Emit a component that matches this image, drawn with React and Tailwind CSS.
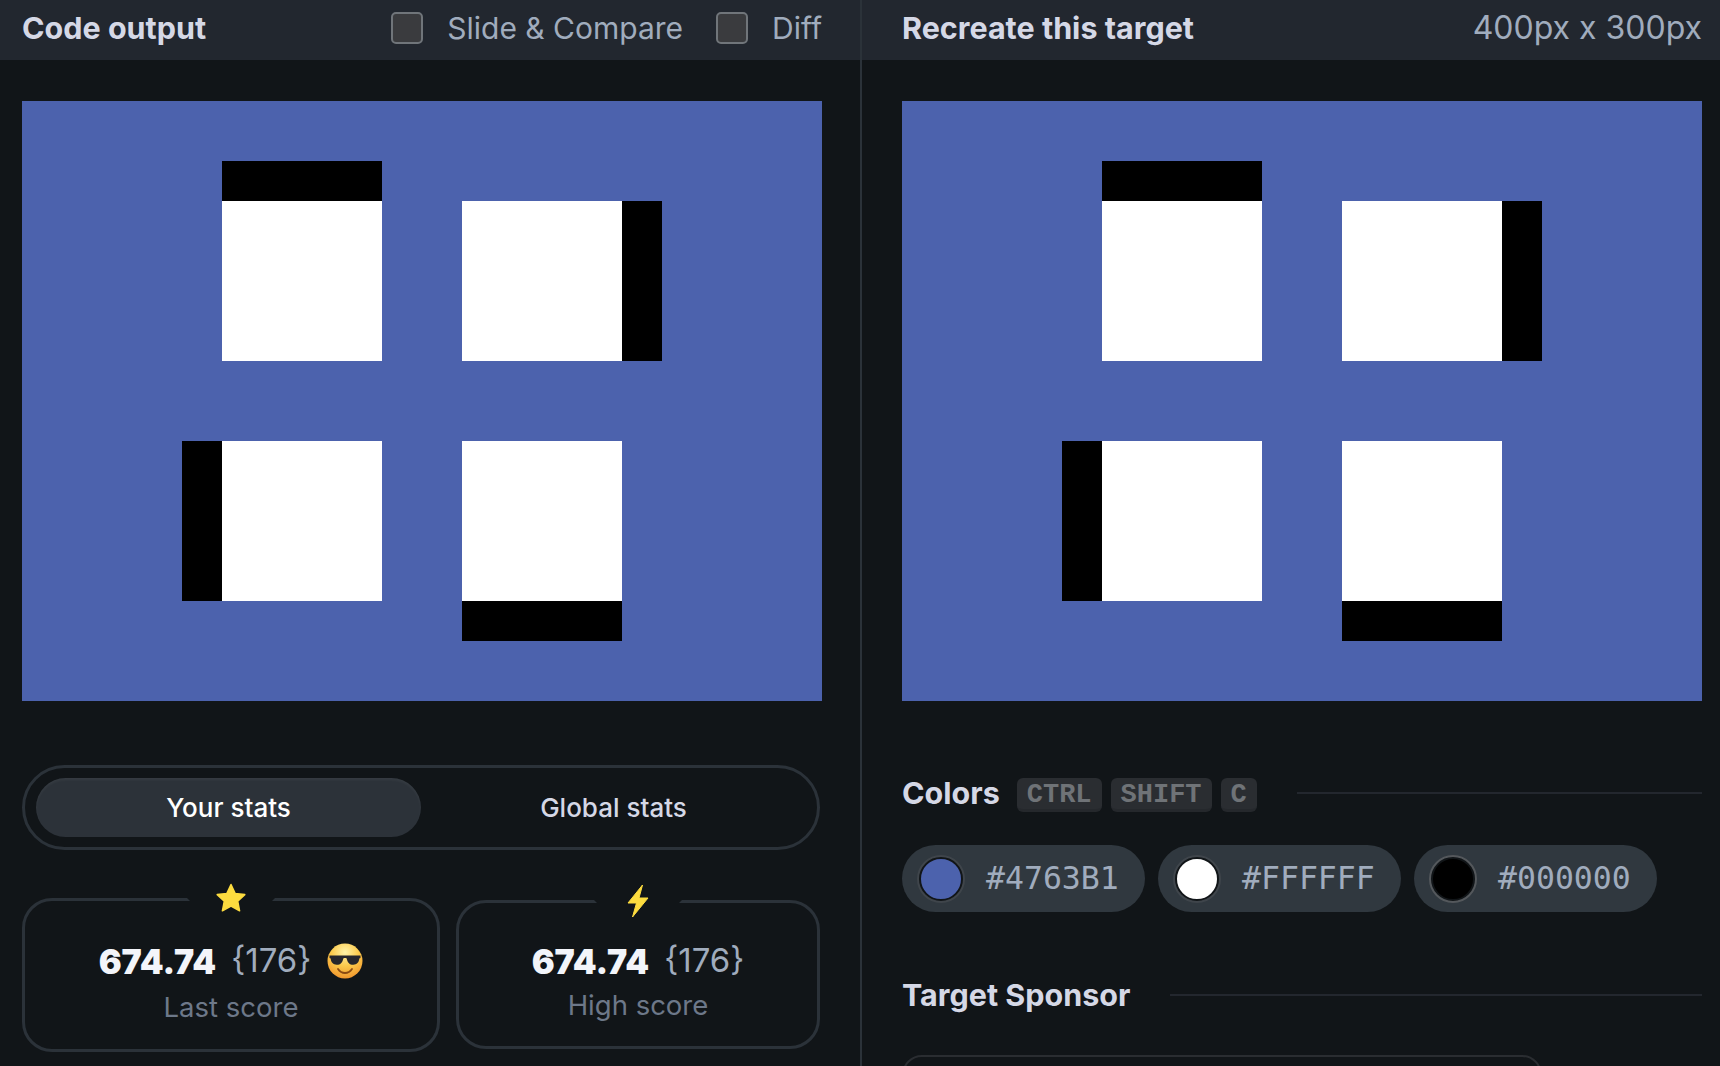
const sans = "font-['Inter',sans-serif]";

function Canvas() {
  return (
    <div className="relative w-[800px] h-[600px] shrink-0 bg-[#4c62ad] overflow-hidden">
      <div className="absolute left-[200px] top-[60px] w-[160px] h-[40px] bg-black" />
      <div className="absolute left-[200px] top-[100px] w-[160px] h-[160px] bg-white" />
      <div className="absolute left-[440px] top-[100px] w-[160px] h-[160px] bg-white" />
      <div className="absolute left-[600px] top-[100px] w-[40px] h-[160px] bg-black" />
      <div className="absolute left-[160px] top-[340px] w-[40px] h-[160px] bg-black" />
      <div className="absolute left-[200px] top-[340px] w-[160px] h-[160px] bg-white" />
      <div className="absolute left-[440px] top-[340px] w-[160px] h-[160px] bg-white" />
      <div className="absolute left-[440px] top-[500px] w-[160px] h-[40px] bg-black" />
    </div>
  );
}

function Star() {
  return (
    <svg width="32" height="32" viewBox="0 0 32 32" className="relative -mt-[2px]">
      <path d="M16 2.500l4.100 8.900 9.700 1.200-7.100 6.600 1.900 9.600-8.600-4.800-8.600 4.800 1.900-9.600-7.100-6.600 9.700-1.200z" fill="#fddc3f" stroke="#fddc3f" strokeWidth="1.500" strokeLinejoin="round" />
    </svg>
  );
}

function Bolt() {
  return (
    <svg width="24" height="34" viewBox="0 0 24 34" className="relative">
      <path d="M16.500 1L2 19h8.500L6.500 33 22 14h-9z" fill="#fddc3f" stroke="#fddc3f" strokeWidth="1" strokeLinejoin="round" />
    </svg>
  );
}

function Cool() {
  return (
    <svg width="36" height="36" viewBox="0 0 36 36">
      <defs>
        <radialGradient id="f" cx="50%" cy="25%" r="80%">
          <stop offset="0%" stopColor="#fff3a8" />
          <stop offset="50%" stopColor="#fcc94a" />
          <stop offset="100%" stopColor="#ee8f2a" />
        </radialGradient>
      </defs>
      <circle cx="18" cy="18" r="17.500" fill="url(#f)" />
      <path d="M2.500 12.500h31v2.500l-1.200.6c-.4 4-2.500 6.200-6 6.200-3.800 0-6-2.600-6.600-6.400-.9-.6-2.500-.6-3.400 0-.6 3.800-2.800 6.400-6.600 6.400-3.500 0-5.600-2.200-6-6.200l-1.200-.6z" fill="#26262c" />
      <path d="M11 26c2 3 4.500 4 7 4s5-1 7-4" fill="none" stroke="#8a4a12" strokeWidth="1.800" strokeLinecap="round" />
    </svg>
  );
}

function Check({ label }) {
  return (
    <div className="flex items-center gap-[24px]">
      <div className="w-[32px] h-[32px] rounded-[5px] border-2 border-[#70757a] bg-[#3a3b3e]" />
      <span className="text-[30px] leading-none text-[#a0acbd]">{label}</span>
    </div>
  );
}

function ScoreCard({ icon, label, emoji, cls, labelCls }) {
  return (
    <div className={`relative flex flex-col items-center border-[3px] border-[#2b3239] rounded-[30px] ${cls}`}>
      <div className="absolute flex items-center justify-center w-[88px] h-[40px] left-1/2 -translate-x-1/2 -top-[22px]">
        <div className="absolute left-0 right-0 top-0 h-[22px] bg-[#111518] [clip-path:polygon(0_0,100%_0,100%_19px,calc(100%-3px)_22px,3px_22px,0_19px)]" />
        {icon}
      </div>
      <div className="flex items-center h-[40px]">
        <span className="text-[34px] font-black text-[#f3f5fa]">674.74</span>
        <span className="ml-[15px] text-[33px] text-[#a0acbd]">{"{176}"}</span>
        {emoji && <span className="ml-[16px] flex"><Cool /></span>}
      </div>
      <span className={`text-[27.500px] leading-none text-[#6d7889] ${labelCls}`}>{label}</span>
    </div>
  );
}

function Kbd({ children }) {
  return (
    <span className="px-[10px] pt-[4px] h-[34px] flex items-center rounded-[6px] bg-[#2a2d31] border-b-[3px] border-[#25282c] font-['Liberation_Mono',monospace] font-bold text-[27px] text-[#6f7377]">
      {children}
    </span>
  );
}

function Swatch({ color, ring, text }) {
  return (
    <div className="flex items-center w-[243px] h-[67px] rounded-full bg-[#30383f] pl-[16px]">
      <div className={`w-[46px] h-[46px] rounded-full border-[3px] border-[#111518] outline-2 -outline-offset-1 ${ring}`} style={{ backgroundColor: color }} />
      <span className="ml-[22px] font-['DejaVu_Sans_Mono',monospace] text-[31.500px] leading-none text-[#a0acbd]">{text}</span>
    </div>
  );
}

const title = "text-[30.500px] leading-none font-bold text-[#d5d8e6]";

export default function App() {
  return (
    <div className={`flex w-[1720px] h-[1066px] overflow-hidden bg-[#111518] ${sans}`}>
      <div className="w-[860px] shrink-0 flex flex-col">
        <div className="flex items-center h-[60px] shrink-0 bg-[#22272f] pl-[22px] pr-[38px] pb-[4px]">
          <span className={title}>Code output</span>
          <div className="ml-auto flex items-center gap-[33px]">
            <Check label="Slide & Compare" />
            <Check label="Diff" />
          </div>
        </div>
        <div className="flex-1 flex flex-col px-[22px] pt-[41px]">
          <Canvas />
          <div className="mt-[64px] w-[798px] h-[85px] p-[11px] rounded-full border-[3px] border-[#2b3239] flex items-center text-[26px] font-medium">
            <div className="w-[385px] h-[59px] flex items-center justify-center rounded-full bg-[#2c3239] text-white shadow-[inset_0_2px_3px_rgba(255,255,255,0.05)]">Your stats</div>
            <div className="flex-1 flex items-center justify-center text-[#d5d8e6]">Global stats</div>
          </div>
          <div className="mt-[48px] flex items-start gap-[16px]">
            <ScoreCard cls="w-[418px] h-[154px] pt-[40px]" icon={<Star />} label="Last score" labelCls="mt-[13px]" emoji />
            <ScoreCard cls="w-[364px] h-[149px] mt-[2px] pt-[38px]" icon={<Bolt />} label="High score" labelCls="mt-[11px]" />
          </div>
        </div>
      </div>
      <div className="w-[2px] shrink-0 bg-[#2b3239]" />
      <div className="flex-1 flex flex-col">
        <div className="flex items-center justify-between h-[60px] shrink-0 bg-[#22272f] pl-[40px] pr-[18px] pb-[4px]">
          <span className={title}>Recreate this target</span>
          <span className="text-[32px] leading-none text-[#a0acbd]">400px x 300px</span>
        </div>
        <div className="flex-1 flex flex-col pl-[40px] pr-[18px] pt-[41px]">
          <Canvas />
          <div className="mt-[77px] flex items-center h-[34px] shrink-0">
            <span className={`${title} -translate-y-[2px]`}>Colors</span>
            <div className="ml-[17px] flex gap-[9px]">
              <Kbd>CTRL</Kbd>
              <Kbd>SHIFT</Kbd>
              <Kbd>C</Kbd>
            </div>
            <div className="ml-[40px] flex-1 h-[2px] -translate-y-[2px] bg-[#23272e]" />
          </div>
          <div className="mt-[33px] flex gap-[13px] shrink-0">
            <Swatch color="#4c62ad" ring="outline-[#3f454b]" text="#4763B1" />
            <Swatch color="#ffffff" ring="outline-[#3f454b]" text="#FFFFFF" />
            <Swatch color="#000000" ring="outline-[#54585c]" text="#000000" />
          </div>
          <div className="mt-[66px] flex items-center h-[34px] shrink-0">
            <span className={title}>Target Sponsor</span>
            <div className="ml-[40px] flex-1 h-[2px] bg-[#23272e]" />
          </div>
          <div className="mt-[43px] w-[640px] h-[80px] shrink-0 rounded-[20px] border-2 border-[#2a2d31]" />
        </div>
      </div>
    </div>
  );
}
